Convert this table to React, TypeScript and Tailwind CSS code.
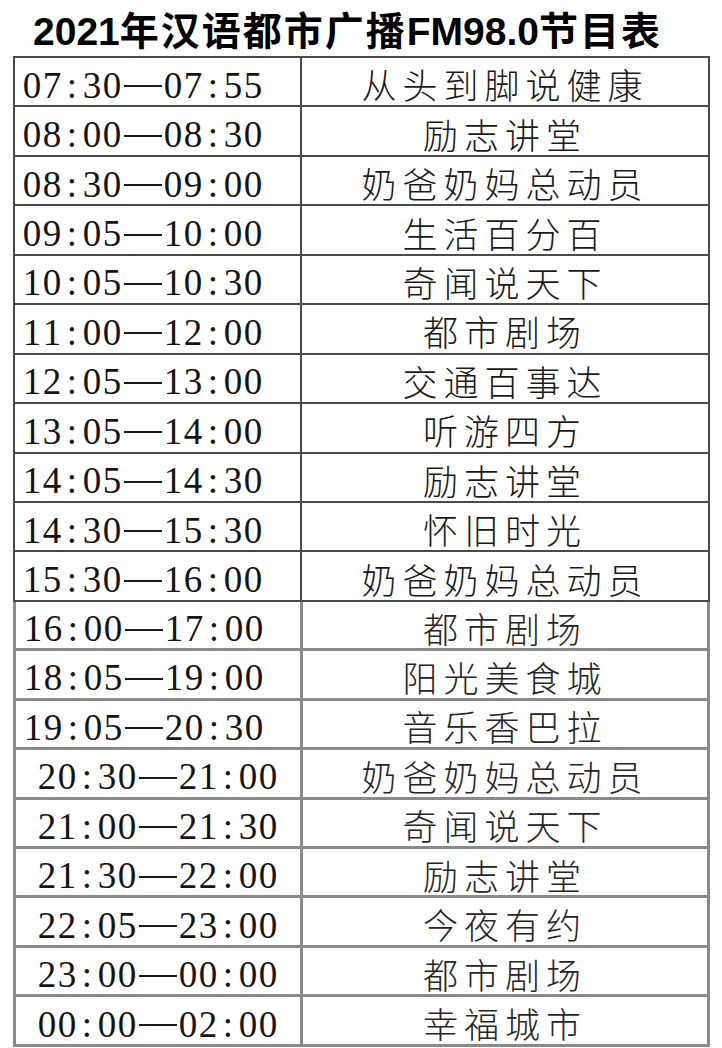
import React from "react";

type Row = { a: string; b: string; name: string; indent?: boolean };

const upper: Row[] = [
  { a: "07:30", b: "07:55", name: "从头到脚说健康" },
  { a: "08:00", b: "08:30", name: "励志讲堂" },
  { a: "08:30", b: "09:00", name: "奶爸奶妈总动员" },
  { a: "09:05", b: "10:00", name: "生活百分百" },
  { a: "10:05", b: "10:30", name: "奇闻说天下" },
  { a: "11:00", b: "12:00", name: "都市剧场" },
  { a: "12:05", b: "13:00", name: "交通百事达" },
  { a: "13:05", b: "14:00", name: "听游四方" },
  { a: "14:05", b: "14:30", name: "励志讲堂" },
  { a: "14:30", b: "15:30", name: "怀旧时光" },
  { a: "15:30", b: "16:00", name: "奶爸奶妈总动员" },
];

const lower: Row[] = [
  { a: "16:00", b: "17:00", name: "都市剧场" },
  { a: "18:05", b: "19:00", name: "阳光美食城" },
  { a: "19:05", b: "20:30", name: "音乐香巴拉" },
  { a: "20:30", b: "21:00", name: "奶爸奶妈总动员", indent: true },
  { a: "21:00", b: "21:30", name: "奇闻说天下", indent: true },
  { a: "21:30", b: "22:00", name: "励志讲堂", indent: true },
  { a: "22:05", b: "23:00", name: "今夜有约", indent: true },
  { a: "23:00", b: "00:00", name: "都市剧场", indent: true },
  { a: "00:00", b: "02:00", name: "幸福城市", indent: true },
];

function Chars({ s }: { s: string }) {
  return (
    <>
      {s.split("").map((c, i) => (
        <span key={i} className="inline-block w-[20px] text-center">
          {c}
        </span>
      ))}
    </>
  );
}

function Time({ a, b }: { a: string; b: string }) {
  return (
    <span className="whitespace-nowrap">
      <Chars s={a} />
      <span className="inline-block w-[41px] align-middle">
        <span className="block h-[2px] w-[38px] mx-auto mb-[6px] bg-[#1a1a1a]" />
      </span>
      <Chars s={b} />
    </span>
  );
}

function TableRow({ row, low }: { row: Row; low: boolean }) {
  return (
    <div
      className={
        "flex h-[49.45px] " +
        (low ? "border-b-[3px] border-[#8a8a8a]" : "border-b-2 border-[#4a4a4a]")
      }
    >
      <div
        className={
          "w-[287px] shrink-0 flex items-center pt-[7px] text-[37px] leading-[37px] text-[#141414] " +
          (row.indent ? "pl-[21px] " : "pl-[7px] ") +
          (low ? "border-r-[3px] border-[#8a8a8a]" : "border-r-2 border-[#4a4a4a]")
        }
        style={{ fontFamily: '"Liberation Serif", serif' }}
      >
        <Time a={row.a} b={row.b} />
      </div>
      <div
        className={
          "flex-1 flex items-center justify-center pt-[4px] pr-[6px] text-[35px] leading-[35px] tracking-[6px] font-light whitespace-nowrap " +
          (low ? "text-[#262626]" : "text-[#1a1a1a]")
        }
        style={{ fontFamily: '"Noto Sans CJK SC", sans-serif' }}
      >
        <span className="pl-[6px]">{row.name}</span>
      </div>
    </div>
  );
}

export default function App() {
  const cjk = "tracking-[2px]";
  return (
    <div className="w-[722px] h-[1048px] bg-white overflow-hidden">
      <div
        className="h-[56px] pl-[33px] pt-[9px] text-[39px] leading-[39px] font-bold text-black whitespace-nowrap"
        style={{ fontFamily: '"Liberation Sans", "Noto Sans CJK SC", sans-serif' }}
      >
        <span>2021</span>
        <span className={cjk} style={{ fontFamily: '"Noto Sans CJK SC", sans-serif' }}>
          年汉语都市广播
        </span>
        <span>FM98.0</span>
        <span className={cjk} style={{ fontFamily: '"Noto Sans CJK SC", sans-serif' }}>
          节目表
        </span>
      </div>
      <div className="ml-[13px] w-[697px]">
        <div className="border-t-2 border-l-2 border-r-2 border-[#4a4a4a]">
          {upper.map((r, i) => (
            <TableRow key={i} row={r} low={false} />
          ))}
        </div>
        <div className="border-l-[3px] border-r-[3px] border-[#8a8a8a]">
          {lower.map((r, i) => (
            <TableRow key={i} row={r} low={true} />
          ))}
        </div>
      </div>
    </div>
  );
}
